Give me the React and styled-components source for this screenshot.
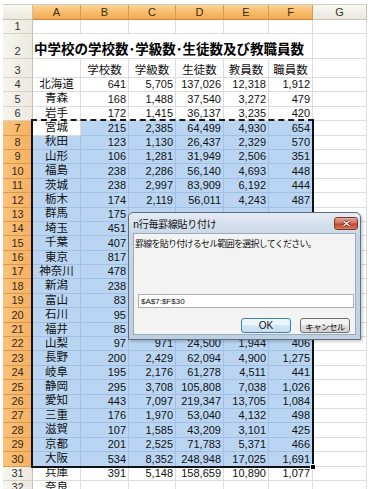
import React from 'react'
import styled, { createGlobalStyle, css } from 'styled-components'

const GlobalStyle = createGlobalStyle`
  html, body {
    margin: 0;
    padding: 0;
    background: #fff;
    overflow: hidden;
  }
  body {
    font-family: "Liberation Sans", "Noto Sans CJK JP", sans-serif;
  }
`

const COL_W = [30, 48, 48, 47, 48, 45, 44, 54]
const ROW_H = [15, 14, 25, 19, ...Array(29).fill(14.4)]
const LETTERS = ['A', 'B', 'C', 'D', 'E', 'F', 'G']

const HEADS = ['学校数', '学級数', '生徒数', '教員数', '職員数']

// rows 13-21 columns C-F sit under the dialog and are not shown
const DATA = [
  ['北海道', '641', '5,705', '137,026', '12,318', '1,912'],
  ['青森', '168', '1,488', '37,540', '3,272', '479'],
  ['岩手', '172', '1,415', '36,137', '3,235', '420'],
  ['宮城', '215', '2,385', '64,499', '4,930', '654'],
  ['秋田', '123', '1,130', '26,437', '2,329', '570'],
  ['山形', '106', '1,281', '31,949', '2,506', '351'],
  ['福島', '238', '2,286', '56,140', '4,693', '448'],
  ['茨城', '238', '2,997', '83,909', '6,192', '444'],
  ['栃木', '174', '2,119', '56,011', '4,243', '487'],
  ['群馬', '175', '', '', '', ''],
  ['埼玉', '451', '', '', '', ''],
  ['千葉', '407', '', '', '', ''],
  ['東京', '817', '', '', '', ''],
  ['神奈川', '478', '', '', '', ''],
  ['新潟', '238', '', '', '', ''],
  ['富山', '83', '', '', '', ''],
  ['石川', '95', '', '', '', ''],
  ['福井', '85', '', '', '', ''],
  ['山梨', '97', '971', '24,500', '1,944', '406'],
  ['長野', '200', '2,429', '62,094', '4,900', '1,275'],
  ['岐阜', '195', '2,176', '61,278', '4,511', '441'],
  ['静岡', '295', '3,708', '105,808', '7,038', '1,026'],
  ['愛知', '443', '7,097', '219,347', '13,705', '1,084'],
  ['三重', '176', '1,970', '53,040', '4,132', '498'],
  ['滋賀', '107', '1,585', '43,209', '3,101', '425'],
  ['京都', '201', '2,525', '71,783', '5,371', '466'],
  ['大阪', '534', '8,352', '248,948', '17,025', '1,691'],
  ['兵庫', '391', '5,148', '158,659', '10,890', '1,077'],
  ['奈良', '', '', '', '', ''],
]

const isSelRow = (n) => n >= 7 && n <= 30

// every sheet cell sits at an explicit grid row / column (row 0 = column headers)
const placed = css`
  grid-row: ${(p) => p.$r + 1};
  grid-column: ${(p) => (p.$span ? `${p.$c + 1} / span ${p.$span}` : p.$c + 1)};
`

const Page = styled.div`
  position: relative;
  padding: 4px 0 0 3px;
  height: 489px;
  box-sizing: border-box;
  overflow: hidden;
`

const Sheet = styled.div`
  display: grid;
  grid-template-columns: ${COL_W.map((w) => w + 'px').join(' ')};
  grid-template-rows: ${ROW_H.map((h) => h + 'px').join(' ')};
  width: max-content;
  border-top: 1px solid #cfcdc4;
`

const Corner = styled.div`
  ${placed}
  background: linear-gradient(#f8f7f2, #eae8df);
  border-right: 1px solid #c5c2b4;
  border-bottom: 1px solid #c5c2b4;
  box-sizing: border-box;
`

const ColHead = styled.div`
  ${placed}
  display: flex;
  align-items: center;
  justify-content: center;
  box-sizing: border-box;
  font-size: 11px;
  color: ${(p) => (p.$on ? '#3a2a10' : '#333')};
  background: ${(p) =>
    p.$on
      ? 'linear-gradient(#fcd395, #f7b867 60%, #f4aa52)'
      : 'linear-gradient(#f8f7f2, #eae8df)'};
  border-right: 1px solid ${(p) => (p.$on ? '#d99a4c' : '#c5c2b4')};
  border-bottom: 1px solid ${(p) => (p.$on ? '#c9873a' : '#c5c2b4')};
`

const RowHead = styled.div`
  ${placed}
  display: flex;
  align-items: flex-end;
  justify-content: center;
  box-sizing: border-box;
  padding-bottom: 1px;
  font-size: 11px;
  line-height: 1;
  color: ${(p) => (p.$on ? '#3a2a10' : '#333')};
  background: ${(p) =>
    p.$on
      ? 'linear-gradient(90deg, #f9c27c, #f6b062)'
      : 'linear-gradient(90deg, #f6f5ef, #ebe9e0)'};
  border-right: 1px solid ${(p) => (p.$on ? '#c9873a' : '#c5c2b4')};
  border-bottom: 1px solid ${(p) => (p.$on ? '#d99a4c' : '#d6d3c7')};
`

const Cell = styled.div`
  ${placed}
  display: flex;
  align-items: flex-end;
  justify-content: ${(p) => p.$align || 'flex-end'};
  box-sizing: border-box;
  padding: 0 2px 1px 2px;
  font-size: ${(p) => (p.$cjk ? '11.5px' : '11px')};
  line-height: 1;
  color: #111;
  white-space: nowrap;
  background: ${(p) => (p.$sel ? '#b9d5f2' : '#fff')};
  border-right: 1px solid ${(p) => (p.$sel ? '#a3c0e0' : '#dcdcdc')};
  border-bottom: 1px solid ${(p) => (p.$sel ? '#a3c0e0' : '#dcdcdc')};
`

const TitleCell = styled.div`
  ${placed}
  display: flex;
  align-items: flex-end;
  box-sizing: border-box;
  padding: 0 0 3px 1px;
  font-family: "Noto Sans CJK JP", sans-serif;
  font-weight: bold;
  font-size: 13.5px;
  line-height: 1;
  color: #000;
  white-space: nowrap;
  background: #fff;
  border-right: 1px solid #dcdcdc;
  border-bottom: 1px solid #dcdcdc;
`

const Selection = styled.div`
  grid-column: 2 / 8;
  grid-row: 8 / 32;
  position: relative;
  margin: -2px -1px -1px -2px;
  border: 2px solid #111;
  border-top: 2px dashed #1a1a1a;
  pointer-events: none;
`

const FillHandle = styled.div`
  position: absolute;
  right: -4px;
  bottom: -4px;
  width: 4px;
  height: 4px;
  background: #000;
  border: 1px solid #fff;
`

const Dialog = styled.div`
  position: absolute;
  left: 128px;
  top: 212px;
  width: 233px;
  height: 128px;
  box-sizing: border-box;
  display: flex;
  flex-direction: column;
  padding: 0 4px 4px 4px;
  border: 1px solid #5d6f83;
  border-radius: 5px 5px 0 0;
  background: linear-gradient(#e4ebf3, #c8d6e6 22px, #bfd0e2);
  box-shadow: 2px 2px 3px rgba(0, 0, 0, 0.18);
`

const TitleBar = styled.div`
  height: 20px;
  display: flex;
  align-items: center;
  justify-content: space-between;
  margin-right: -2px;
`

const TitleText = styled.span`
  font-family: "Noto Sans CJK JP", sans-serif;
  font-size: 10px;
  color: #111;
  letter-spacing: -0.3px;
`

const CloseBtn = styled.div`
  width: 24px;
  height: 13px;
  box-sizing: border-box;
  display: flex;
  align-items: center;
  justify-content: center;
  border: 1px solid #7a3a30;
  border-radius: 3px;
  background: linear-gradient(#e9a898, #d0705c 45%, #c0452e 55%, #d57a5c);
`

const Client = styled.div`
  flex: 1;
  display: flex;
  flex-direction: column;
  padding: 4px 1px 1px 1px;
  background: #f3f3f3;
  border: 1px solid #9aabbf;
`

const Message = styled.div`
  font-family: "Noto Sans CJK JP", sans-serif;
  font-size: 9px;
  line-height: 11px;
  letter-spacing: -0.75px;
  color: #111;
`

const Field = styled.div`
  margin: auto 0 0 3px;
  height: 14px;
  box-sizing: border-box;
  display: flex;
  align-items: center;
  padding-left: 2px;
  background: #fff;
  border: 1px solid #abadb3;
  font-size: 8px;
  color: #111;
`

const Buttons = styled.div`
  display: flex;
  justify-content: flex-end;
  gap: 9px;
  margin-top: 10px;
  padding-right: 4px;
`

const Button = styled.div`
  width: 50px;
  height: 15px;
  box-sizing: border-box;
  display: flex;
  align-items: center;
  justify-content: center;
  overflow: hidden;
  white-space: nowrap;
  border: 1px solid ${(p) => (p.$default ? '#3c7fb1' : '#707070')};
  border-radius: 3px;
  background: ${(p) =>
    p.$default
      ? 'linear-gradient(#eaf4fb 50%, #d2e6f5 50%, #c6dff2)'
      : 'linear-gradient(#f3f3f3 50%, #e0e0e0 50%, #d3d3d3)'};
  font-family: "Liberation Sans", "Noto Sans CJK JP", sans-serif;
  font-size: ${(p) => (p.$default ? '10px' : '8.5px')};
  letter-spacing: ${(p) => (p.$default ? '0' : '-0.6px')};
  color: #111;
`

const App = () => {
  const cells = []

  // row 1
  cells.push(<RowHead key="h1" $r={1} $c={0}>1</RowHead>)
  LETTERS.forEach((l, c) => cells.push(<Cell key={'1' + l} $r={1} $c={c + 1} />))

  // row 2 title
  cells.push(<RowHead key="h2" $r={2} $c={0}>2</RowHead>)
  cells.push(
    <TitleCell key="title" $r={2} $c={1} $span={6}>
      中学校の学校数･学級数･生徒数及び教職員数
    </TitleCell>
  )
  cells.push(<Cell key="2G" $r={2} $c={7} />)

  // row 3 headings
  cells.push(<RowHead key="h3" $r={3} $c={0}>3</RowHead>)
  cells.push(<Cell key="3A" $r={3} $c={1} />)
  HEADS.forEach((h, i) =>
    cells.push(
      <Cell key={'3' + h} $r={3} $c={i + 2} $cjk $align="center">
        {h}
      </Cell>
    )
  )
  cells.push(<Cell key="3G" $r={3} $c={7} />)

  DATA.forEach((d, i) => {
    const n = i + 4
    const sel = isSelRow(n)
    cells.push(
      <RowHead key={'h' + n} $r={n} $c={0} $on={sel}>
        {n}
      </RowHead>
    )
    d.forEach((v, c) =>
      cells.push(
        <Cell
          key={n + '-' + c}
          $r={n}
          $c={c + 1}
          $sel={sel && !(n === 7 && c === 0)}
          $cjk={c === 0}
          $align={c === 0 ? 'center' : 'flex-end'}
        >
          {v}
        </Cell>
      )
    )
    cells.push(<Cell key={n + 'G'} $r={n} $c={7} />)
  })

  return (
    <Page>
      <GlobalStyle />
      <Sheet>
        <Corner $r={0} $c={0} />
        {LETTERS.map((l, c) => (
          <ColHead key={l} $r={0} $c={c + 1} $on={l !== 'G'}>
            {l}
          </ColHead>
        ))}
        {cells}
        <Selection>
          <FillHandle />
        </Selection>
      </Sheet>

      <Dialog>
        <TitleBar>
          <TitleText>n行毎罫線貼り付け</TitleText>
          <CloseBtn>
            <svg width="9" height="7" viewBox="0 0 9 7">
              <path d="M1.5 1 L7.5 6 M7.5 1 L1.5 6" stroke="#5a1a10" strokeWidth="2.6" />
              <path d="M1.5 1 L7.5 6 M7.5 1 L1.5 6" stroke="#fff" strokeWidth="1.4" />
            </svg>
          </CloseBtn>
        </TitleBar>
        <Client>
          <Message>罫線を貼り付けるセル範囲を選択してください。</Message>
          <Field>$A$7:$F$30</Field>
          <Buttons>
            <Button $default>OK</Button>
            <Button>キャンセル</Button>
          </Buttons>
        </Client>
      </Dialog>
    </Page>
  )
}

export default App
